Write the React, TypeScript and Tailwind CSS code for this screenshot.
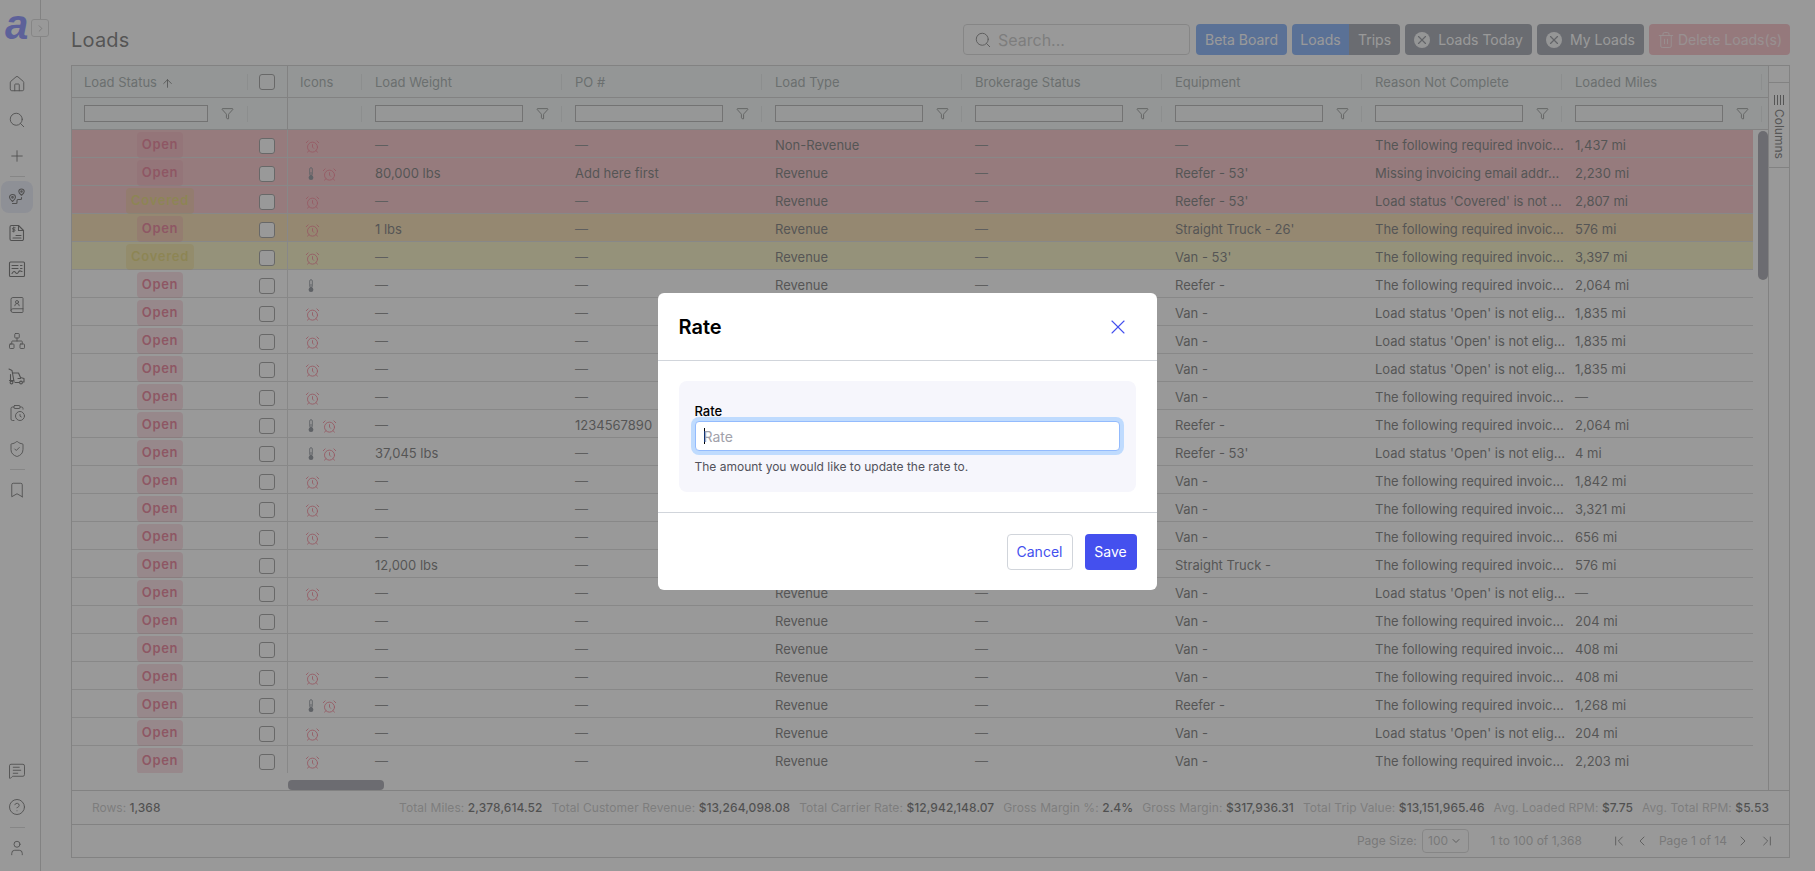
import { ArrowUp, AlarmClock, Bookmark, BookUser, ChevronDown, ChevronFirst, ChevronLast, ChevronLeft, ChevronRight, CircleHelp, ClipboardClock, Funnel, House, MessageSquareText, Network, Plus, Search, ShieldCheck, Trash2, User, X } from "lucide-react";

type Row = {
  status: "Open" | "Covered";
  tone?: "red" | "orange" | "yellow";
  icons: string;
  weight?: string;
  po?: string;
  type?: string;
  equipment?: string;
  reason: "f" | "m" | "c" | "o";
  miles?: string;
};

const reasons = {
  f: "The following required invoic...",
  m: "Missing invoicing email addr...",
  c: "Load status 'Covered' is not ...",
  o: "Load status 'Open' is not elig...",
};

const rows: Row[] = [
  { status: "Open", tone: "red", icons: "a", type: "Non-Revenue", reason: "f", miles: "1,437 mi" },
  { status: "Open", tone: "red", icons: "ta", weight: "80,000 lbs", po: "Add here first", equipment: "Reefer - 53'", reason: "m", miles: "2,230 mi" },
  { status: "Covered", tone: "red", icons: "a", equipment: "Reefer - 53'", reason: "c", miles: "2,807 mi" },
  { status: "Open", tone: "orange", icons: "a", weight: "1 lbs", equipment: "Straight Truck - 26'", reason: "f", miles: "576 mi" },
  { status: "Covered", tone: "yellow", icons: "a", equipment: "Van - 53'", reason: "f", miles: "3,397 mi" },
  { status: "Open", icons: "t", equipment: "Reefer -", reason: "f", miles: "2,064 mi" },
  { status: "Open", icons: "a", equipment: "Van -", reason: "o", miles: "1,835 mi" },
  { status: "Open", icons: "a", equipment: "Van -", reason: "o", miles: "1,835 mi" },
  { status: "Open", icons: "a", equipment: "Van -", reason: "o", miles: "1,835 mi" },
  { status: "Open", icons: "a", equipment: "Van -", reason: "f" },
  { status: "Open", icons: "ta", po: "1234567890", equipment: "Reefer -", reason: "f", miles: "2,064 mi" },
  { status: "Open", icons: "ta", weight: "37,045 lbs", equipment: "Reefer - 53'", reason: "o", miles: "4 mi" },
  { status: "Open", icons: "a", equipment: "Van -", reason: "f", miles: "1,842 mi" },
  { status: "Open", icons: "a", equipment: "Van -", reason: "f", miles: "3,321 mi" },
  { status: "Open", icons: "a", equipment: "Van -", reason: "f", miles: "656 mi" },
  { status: "Open", icons: "", weight: "12,000 lbs", equipment: "Straight Truck -", reason: "f", miles: "576 mi" },
  { status: "Open", icons: "a", equipment: "Van -", reason: "o" },
  { status: "Open", icons: "", equipment: "Van -", reason: "f", miles: "204 mi" },
  { status: "Open", icons: "", equipment: "Van -", reason: "f", miles: "408 mi" },
  { status: "Open", icons: "a", equipment: "Van -", reason: "f", miles: "408 mi" },
  { status: "Open", icons: "ta", equipment: "Reefer -", reason: "f", miles: "1,268 mi" },
  { status: "Open", icons: "a", equipment: "Van -", reason: "o", miles: "204 mi" },
  { status: "Open", icons: "a", equipment: "Van -", reason: "f", miles: "2,203 mi" },
];

const stats = [
  ["Total Miles:", "2,378,614.52"],
  ["Total Customer Revenue:", "$13,264,098.08"],
  ["Total Carrier Rate:", "$12,942,148.07"],
  ["Gross Margin %:", "2.4%"],
  ["Gross Margin:", "$317,936.31"],
  ["Total Trip Value:", "$13,151,965.46"],
  ["Avg. Loaded RPM:", "$7.75"],
  ["Avg. Total RPM:", "$5.53"],
];

const columns = ["Load Weight", "PO #", "Load Type", "Brokerage Status", "Equipment", "Reason Not Complete", "Loaded Miles"];

const toneClass = {
  red: "bg-[#f4a2a8]",
  orange: "bg-[#f2c880]",
  yellow: "bg-[#f2ea9e]",
};

const RouteIcon = () => (
  <svg width="18" height="18" viewBox="0 0 18 18" fill="none" stroke="currentColor" strokeWidth="1.1" strokeLinecap="round" strokeLinejoin="round">
    <path d="M4.5 6.5c-1.8 0-3 1.3-3 2.8 0 1.8 3 4.2 3 4.2s3-2.4 3-4.2c0-1.5-1.2-2.8-3-2.8Z" />
    <circle cx="4.5" cy="9.3" r="0.8" />
    <path d="M13.5 1c-1.6 0-2.7 1.2-2.7 2.5 0 1.6 2.7 3.8 2.7 3.8s2.7-2.2 2.7-3.8C16.2 2.2 15.1 1 13.5 1Z" />
    <circle cx="13.5" cy="3.6" r="0.7" />
    <path d="M13.5 9.5v1a1 1 0 0 1-1 1h-2.5a1 1 0 0 0-1 1v2a1 1 0 0 1-1 1H4.500" />
  </svg>
);

const DollarDocIcon = () => (
  <svg width="18" height="18" viewBox="0 0 18 18" fill="none" stroke="currentColor" strokeWidth="1.1" strokeLinecap="round" strokeLinejoin="round">
    <path d="M3.5 1.5h7l5 5V15a1.5 1.5 0 0 1-1.5 1.5H3.5A1.5 1.5 0 0 1 2 15V3a1.5 1.5 0 0 1 1.5-1.5Z" />
    <path d="M10.5 1.5v5h5M8 11.500h5M5 14h8" />
    <path d="M7.2 3.800H5.300a.8.8 0 0 0 0 1.700h.9a.8.8 0 0 1 0 1.700H4.300M5.700 3v5" strokeWidth="0.9" />
  </svg>
);

const ReportIcon = () => (
  <svg width="18" height="18" viewBox="0 0 18 18" fill="none" stroke="currentColor" strokeWidth="1.1" strokeLinecap="round" strokeLinejoin="round">
    <rect x="1.5" y="2" width="15" height="14.5" rx="1" />
    <path d="M4 5.500h6M12.500 5.500h1.500M4 8.500h6M12.500 8.500h1.500" />
    <path d="M4 13.500c1.500-2.500 2.500-2.500 3.500-1s2 1.500 3-.5 2-1 3.500-.5" />
  </svg>
);

const TruckIcon = () => (
  <svg width="18" height="18" viewBox="0 0 18 18" fill="none" stroke="currentColor" strokeWidth="1.1" strokeLinecap="round" strokeLinejoin="round">
    <path d="M1 1l3 1.500L6 13.500M5 5l5.500 0 2 4.500 3.500 1v3.500h-1M1.500 12.500H6M2.500 6.500v6M7 14.500h4" />
    <circle cx="3.5" cy="14.5" r="1.4" />
    <circle cx="13" cy="14.5" r="1.4" />
    <path d="M10 10.500h2.500" />
  </svg>
);

const ThermoIcon = () => (
  <svg width="8" height="14" viewBox="0 0 8 14" className="ml-[2px] shrink-0 text-[#4a5360]">
    <rect x="2.7" y="0.7" width="2.6" height="8" rx="1.3" fill="none" stroke="currentColor" strokeWidth="0.9" />
    <circle cx="4" cy="10.7" r="2.4" fill="currentColor" />
    <path d="M4 5v5" stroke="currentColor" strokeWidth="0.9" />
  </svg>
);

const Side = ({ children, active }: { children: React.ReactNode; active?: boolean }) => (
  <div className={`flex w-8 items-center justify-center rounded-lg text-[#1c1c1c] ${active ? "h-8 bg-[#dde1f5]" : "h-9"}`}>{children}</div>
);

const Dash = () => <span className="text-[#4a4a4a]">—</span>;

const CloseBadge = () => (
  <span className="flex h-4 w-4 shrink-0 items-center justify-center rounded-full bg-[#f3f4f6] text-[#555b66]">
    <X size={14} strokeWidth={2} />
  </span>
);

const Divider = () => <span className="my-[2px] h-px w-[15px] bg-[#c4c4c4]" />;

const GripLine = () => <span className="absolute right-0 top-[8px] h-4 w-px bg-[#d5dcdb]" />;

const HeaderCell = ({ label }: { label: string }) => (
  <div className="relative flex h-full w-[200px] shrink-0 items-center px-[13px] pt-[3px]">
    {label}
    <GripLine />
  </div>
);

const FilterCell = () => (
  <div className="relative flex h-full w-[200px] shrink-0 items-center px-[13px]">
    <span className="h-[17px] w-[148px] border border-[#888] bg-[#f4f9f8]" />
    <Funnel size={13} strokeWidth={1.3} className="ml-[13px] text-[#1c1c1c]" />
    <GripLine />
  </div>
);

const Cell = ({ children }: { children?: React.ReactNode }) => (
  <div className="flex h-full w-[200px] shrink-0 items-center whitespace-nowrap px-[13px] pt-[5px]">{children}</div>
);

export default function App() {
  return (
    <div className="relative flex h-[871px] w-[1815px] overflow-hidden bg-white text-[13px] text-[#2a2a2a]" style={{ fontFamily: "Inter, 'Liberation Sans', sans-serif" }}>
      <aside className="flex w-[41px] shrink-0 flex-col items-start border-r border-[#b8b8b8] pb-[5px] pl-[1px] pt-[6px]">
        <div className="relative flex h-[50px] w-full items-start">
          <span className="ml-[4px] mt-[-3px] text-[42px] font-black italic leading-[44px] text-[#4450ff]" style={{ fontFamily: "'Liberation Sans', sans-serif" }}>a</span>
          <span className="absolute left-[30px] top-[13px] z-10 flex h-[18px] w-[18px] items-center justify-center rounded-[3px] border border-[#c4c4c4] bg-white text-[#999]">
            <ChevronRight size={11} />
          </span>
        </div>
        <div className="mt-[10px] flex flex-col items-center">
          <Side><House size={18} strokeWidth={1.2} /></Side>
          <Side><Search size={18} strokeWidth={1.2} /></Side>
          <Side><Plus size={18} strokeWidth={1.2} /></Side>
          <Divider />
          <div className="mb-[2px] mt-[2px]"><Side active><RouteIcon /></Side></div>
          <Side><DollarDocIcon /></Side>
          <Side><ReportIcon /></Side>
          <Side><BookUser size={18} strokeWidth={1.2} /></Side>
          <Side><Network size={18} strokeWidth={1.2} /></Side>
          <Side><TruckIcon /></Side>
          <Side><ClipboardClock size={18} strokeWidth={1.2} /></Side>
          <Side><ShieldCheck size={18} strokeWidth={1.2} /></Side>
          <Divider />
          <Side><Bookmark size={18} strokeWidth={1.2} /></Side>
        </div>
        <div className="mt-auto flex flex-col items-center">
          <Side><MessageSquareText size={18} strokeWidth={1.2} /></Side>
          <Side><CircleHelp size={18} strokeWidth={1.2} /></Side>
          <Divider />
          <Side><User size={18} strokeWidth={1.2} /></Side>
        </div>
      </aside>

      <main className="flex min-w-0 flex-1 flex-col pb-[13px] pl-[30px] pr-[25px] pt-[24px]">
        <div className="flex h-[31px] shrink-0 items-center">
          <h1 className="text-[20px] font-normal leading-none tracking-[0.2px] text-[#2a2a2a]">Loads</h1>
          <div className="ml-auto flex h-full items-center gap-[5px] text-[14px] text-white">
            <div className="mr-[1px] flex h-full w-[227px] items-center gap-[6px] rounded border border-[#c4c4c4] px-[10px] text-[#a8a8a8]">
              <Search size={18} strokeWidth={1.3} className="text-[#444]" />
              <span className="text-[16px]">Search...</span>
            </div>
            <div className="flex h-full w-[91px] items-center justify-center rounded bg-[#3b82f6]">Beta Board</div>
            <div className="flex h-full overflow-hidden rounded">
              <span className="flex w-[57px] items-center justify-center bg-[#3b82f6]">Loads</span>
              <span className="flex w-[51px] items-center justify-center bg-[#6b7280]">Trips</span>
            </div>
            <div className="flex h-full w-[127px] items-center justify-center gap-[8px] rounded bg-[#6b7280]"><CloseBadge />Loads Today</div>
            <div className="flex h-full w-[107px] items-center justify-center gap-[8px] rounded bg-[#6b7280]"><CloseBadge />My Loads</div>
            <div className="flex h-full w-[141px] items-center justify-center gap-[3px] rounded bg-[#f29aa4] text-[#fbe3e5]"><Trash2 size={18} strokeWidth={1.2} />Delete Loads(s)</div>
          </div>
        </div>

        <section className="mt-[10px] flex min-h-0 flex-1 flex-col border border-[#b8b8b8]">
          <div className="flex min-h-0 flex-1">
            <div className="flex min-w-0 flex-1 flex-col">
              <div className="flex h-[32px] shrink-0 items-center border-b border-[#b8b8b8] bg-[#eef6f4] text-[#6f7b7b]">
                <div className="relative flex h-full w-[176px] shrink-0 items-center gap-[3px] px-[12px] pt-[3px]">
                  Load Status
                  <ArrowUp size={13} strokeWidth={1.5} className="ml-[1px] text-[#1c1c1c]" />
                  <GripLine />
                </div>
                <div className="flex h-full w-[40px] shrink-0 items-center justify-center border-r border-[#b8b8b8] pr-[1px]">
                  <span className="h-4 w-4 rounded-[3px] border border-[#666] bg-[#f4f9f8]" />
                </div>
                <div className="relative flex h-full w-[74px] shrink-0 items-center px-[12px] pt-[3px]">
                  Icons
                  <GripLine />
                </div>
                {columns.map((c) => <HeaderCell key={c} label={c} />)}
              </div>
              <div className="flex h-[32px] shrink-0 items-center border-b border-[#b8b8b8] bg-[#eef6f4]">
                <div className="relative flex h-full w-[176px] shrink-0 items-center px-[12px]">
                  <span className="h-[17px] w-[124px] border border-[#888] bg-[#f4f9f8]" />
                  <Funnel size={13} strokeWidth={1.3} className="ml-[13px] text-[#1c1c1c]" />
                  <GripLine />
                </div>
                <div className="h-full w-[40px] shrink-0 border-r border-[#b8b8b8]" />
                <div className="relative h-full w-[74px] shrink-0">
                  <GripLine />
                </div>
                {columns.map((c) => <FilterCell key={c} />)}
              </div>
              <div className="flex min-h-0 flex-1">
                <div className="min-w-0 flex-1 overflow-hidden">
                  {rows.map((r, i) => (
                    <div key={i} className={`flex h-[28px] items-center border-b border-[#c8c8c8] ${r.tone ? toneClass[r.tone] : ""}`}>
                      <div className="flex h-full w-[176px] shrink-0 justify-center">
                        <span className={`mt-[2px] flex h-[26px] items-center rounded px-[5px] font-semibold tracking-[0.7px] ${r.status === "Open" ? "bg-[#e8667f]/35 text-[#dc3058]" : "bg-[#dcaa10]/30 text-[#d8c028]"}`}>{r.status}</span>
                      </div>
                      <div className="flex h-full w-[40px] shrink-0 items-center justify-center border-r border-[#c8c8c8] pr-[1px] pt-[4px]">
                        <span className="h-4 w-4 rounded-[3px] border border-[#666] bg-white" />
                      </div>
                      <div className="flex h-full w-[74px] shrink-0 items-center gap-[7px] pl-[17px] pt-[5px]">
                        {r.icons.includes("t") && <ThermoIcon />}
                        {r.icons.includes("a") && <AlarmClock size={15} strokeWidth={1.4} className="text-[#f53a58]" />}
                      </div>
                      <Cell>{r.weight ?? <Dash />}</Cell>
                      <Cell>{r.po ?? <Dash />}</Cell>
                      <Cell>{r.type ?? "Revenue"}</Cell>
                      <Cell><Dash /></Cell>
                      <Cell>{r.equipment ?? <Dash />}</Cell>
                      <Cell>{reasons[r.reason]}</Cell>
                      <Cell>{r.miles ?? <Dash />}</Cell>
                    </div>
                  ))}
                </div>
                <div className="w-[15px] shrink-0 pt-[1px]">
                  <div className="ml-[5px] h-[149px] w-[10px] rounded-full bg-[#737380]" />
                </div>
              </div>
              <div className="h-[17px] shrink-0 pl-[216px] pt-[7px]">
                <div className="h-[10px] w-[96px] rounded-[4px] bg-[#737380]" />
              </div>
            </div>
            <div className="w-[21px] shrink-0 border-l border-[#b8b8b8]">
              <div className="mt-[16px] flex h-[86px] flex-col items-center gap-[4px] border-y border-[#b8b8b8] pt-[12px] text-[#2a2a2a]">
                <svg width="12" height="10" viewBox="0 0 12 10" stroke="currentColor" strokeWidth="1"><path d="M1.5 0v10M4.5 0v10M7.5 0v10M10.5 0v10" /></svg>
                <span className="text-[12px] [writing-mode:vertical-rl]">Columns</span>
              </div>
            </div>
          </div>
          <div className="flex h-[35px] shrink-0 items-center border-y border-[#b8b8b8] pl-[20px] pr-[20px] text-[12px]">
            <span className="text-[#a8a8a8]">Rows: <span className="font-medium text-[#1c1c1c]">1,368</span></span>
            <div className="ml-auto flex gap-[9px] tracking-[0.07px]">
              {stats.map(([label, value]) => (
                <span key={label} className="text-[#a8a8a8]">{label} <span className="font-medium text-[#1c1c1c]">{value}</span></span>
              ))}
            </div>
          </div>
          <div className="flex h-[32px] shrink-0 items-center justify-end pr-[14px] text-[12px] text-[#999]">
            <span>Page Size:</span>
            <span className="ml-[5px] flex h-[24px] w-[47px] items-center justify-center gap-[2px] rounded border border-[#c4c4c4]">100 <ChevronDown size={12} className="text-[#444]" /></span>
            <span className="ml-[22px]">1 to 100 of 1,368</span>
            <ChevronFirst size={16} strokeWidth={1.3} className="ml-[29px] text-[#333]" />
            <ChevronLeft size={16} strokeWidth={1.3} className="ml-[7px] text-[#333]" />
            <span className="ml-[9px]">Page 1 of 14</span>
            <ChevronRight size={16} strokeWidth={1.3} className="ml-[8px] text-[#333]" />
            <ChevronLast size={16} strokeWidth={1.3} className="ml-[8px] text-[#333]" />
          </div>
        </section>
      </main>

      <div className="fixed inset-0 z-40 flex items-start justify-center bg-[rgba(105,105,105,0.684)] pt-[293px]">
        <div className="mr-[1px] w-[499px] rounded-md bg-white">
          <div className="flex h-[68px] items-center justify-between border-b border-[#d1d5db] pl-[21px] pr-[27px]">
            <h2 className="text-[20px] font-semibold text-black">Rate</h2>
            <X size={24} strokeWidth={1.1} className="text-[#4450ee]" />
          </div>
          <div className="px-[21px] py-[20px]">
            <div className="h-[111px] rounded-lg bg-[#f6f6fc] px-[16px] pt-[21px]">
              <label className="block text-[13px] font-medium leading-[18px] text-black">Rate</label>
              <div className="mt-[1px] flex h-[30px] items-center rounded border border-[#93bbfd] bg-white px-[8px] text-[14px] text-[#a1a1aa] ring-4 ring-[#bfdbfe]">
                <span className="mr-[-1px] h-4 w-px bg-black" />Rate
              </div>
              <p className="mt-[8px] text-[12px] leading-4 text-[#52525b]">The amount you would like to update the rate to.</p>
            </div>
          </div>
          <div className="flex h-[78px] items-center justify-end gap-[12px] border-t border-[#d1d5db] px-[20px] text-[14px]">
            <span className="flex h-[36px] w-[66px] items-center justify-center rounded border border-[#d1d5db] text-[#4450ee]">Cancel</span>
            <span className="flex h-[36px] w-[52px] items-center justify-center rounded bg-[#4450ee] text-white">Save</span>
          </div>
        </div>
      </div>
    </div>
  );
}
